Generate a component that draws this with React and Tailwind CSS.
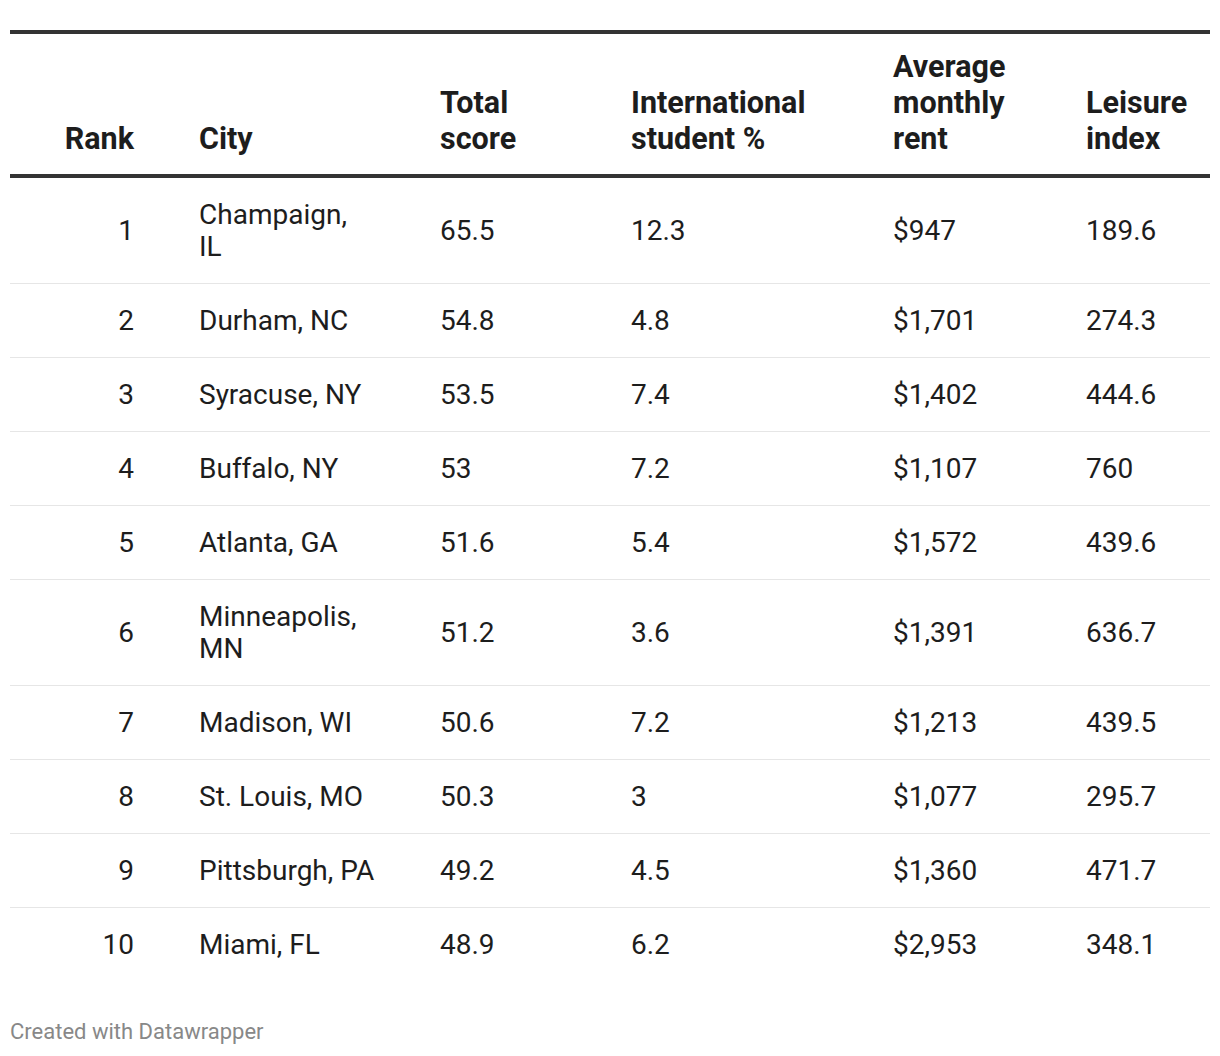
import React from "react";

const rows = [
  { rank: 1, city: ["Champaign,", "IL"], score: "65.5", intl: "12.3", rent: "$947", leisure: "189.6" },
  { rank: 2, city: ["Durham, NC"], score: "54.8", intl: "4.8", rent: "$1,701", leisure: "274.3" },
  { rank: 3, city: ["Syracuse, NY"], score: "53.5", intl: "7.4", rent: "$1,402", leisure: "444.6" },
  { rank: 4, city: ["Buffalo, NY"], score: "53", intl: "7.2", rent: "$1,107", leisure: "760" },
  { rank: 5, city: ["Atlanta, GA"], score: "51.6", intl: "5.4", rent: "$1,572", leisure: "439.6" },
  { rank: 6, city: ["Minneapolis,", "MN"], score: "51.2", intl: "3.6", rent: "$1,391", leisure: "636.7" },
  { rank: 7, city: ["Madison, WI"], score: "50.6", intl: "7.2", rent: "$1,213", leisure: "439.5" },
  { rank: 8, city: ["St. Louis, MO"], score: "50.3", intl: "3", rent: "$1,077", leisure: "295.7" },
  { rank: 9, city: ["Pittsburgh, PA"], score: "49.2", intl: "4.5", rent: "$1,360", leisure: "471.7" },
  { rank: 10, city: ["Miami, FL"], score: "48.9", intl: "6.2", rent: "$2,953", leisure: "348.1" },
];

const headers = [
  { lines: ["Rank"], cls: "text-right pr-[55px]" },
  { lines: ["City"], cls: "pl-[10px]" },
  { lines: ["Total", "score"], cls: "pl-[10px]" },
  { lines: ["International", "student %"], cls: "pl-[10px]" },
  { lines: ["Average", "monthly", "rent"], cls: "pl-[10px]" },
  { lines: ["Leisure", "index"], cls: "pl-[10px]" },
];

const grid = "grid grid-cols-[179px_241px_191px_262px_193px_134px]";

export default function App() {
  return (
    <div
      className="w-[1220px] h-[1056px] bg-white px-[10px] pt-[30px] text-[#1d1d1d]"
      style={{ fontFamily: "Roboto, 'Liberation Sans', sans-serif" }}
    >
      {/* Header */}
      <div className={`${grid} border-t-4 border-b-4 border-[#333333] pt-[15px] pb-[17px] items-end`}>
        {headers.map((h) => (
          <div key={h.lines[0]} className={`text-[30.5px] leading-[36px] font-bold ${h.cls}`}>
            {h.lines.map((l, i) => (
              <div key={i}>{l}</div>
            ))}
          </div>
        ))}
      </div>

      {/* Body */}
      <div>
        {rows.map((r) => (
          <div
            key={r.rank}
            className={`${grid} items-center pt-[21px] pb-[20px] border-b border-[#e6e6e6] last:border-b-0 text-[28px] leading-[32px]`}
          >
            <div className="text-right pr-[55px]">{r.rank}</div>
            <div className="pl-[10px]">
              {r.city.map((c, i) => (
                <div key={i}>{c}</div>
              ))}
            </div>
            <div className="pl-[10px]">{r.score}</div>
            <div className="pl-[10px]">{r.intl}</div>
            <div className="pl-[10px]">{r.rent}</div>
            <div className="pl-[10px]">{r.leisure}</div>
          </div>
        ))}
      </div>

      {/* Footer */}
      <div className="mt-[37px] text-[22px] leading-[28px] text-[#888888]">
        Created with Datawrapper
      </div>
    </div>
  );
}
